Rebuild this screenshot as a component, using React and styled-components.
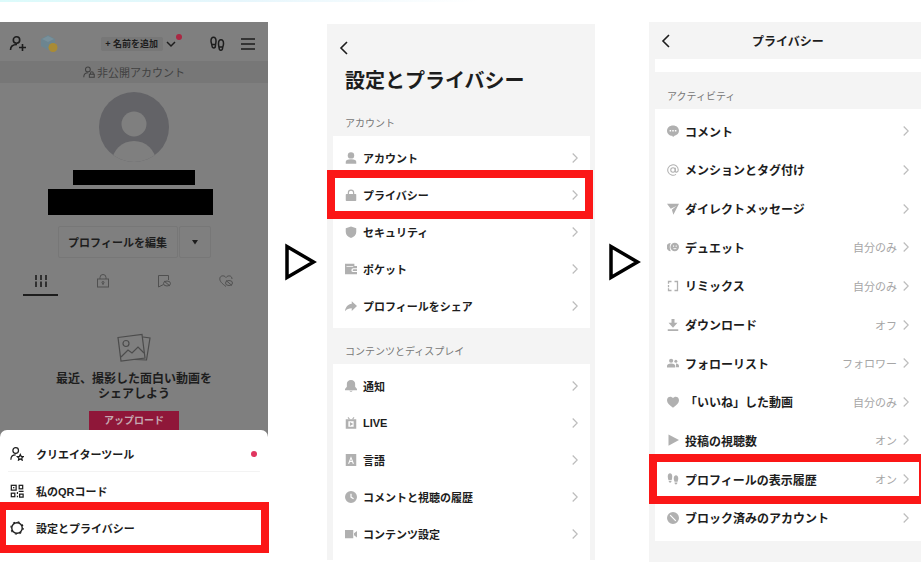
import React from 'react';
import styled, { createGlobalStyle, css } from 'styled-components';

const color = {
  ink: '#1d1d1d',
  muted: '#777',
  faint: '#a6a6a6',
  icon: '#b0b0b0',
  panel: '#f4f4f4',
  dim: '#7f7f7f',
  dimDark: '#777',
  mark: '#fb1717',
  pink: '#e0355f',
};

const GlobalStyle = createGlobalStyle`
  *, *::before, *::after { box-sizing: border-box; }
  body {
    margin: 0;
    background: #fff;
    color: ${color.ink};
    font-family: 'Liberation Sans', 'Noto Sans CJK JP', sans-serif;
    overflow-x: hidden;
  }
  h1, h2, h3, p, ul { margin: 0; padding: 0; }
  ul { list-style: none; }
  button {
    margin: 0;
    padding: 0;
    border: 0;
    background: none;
    color: inherit;
    font: inherit;
    cursor: pointer;
  }
  svg { display: block; flex: none; }
`;

/* ---------- icons ---------- */

const Svg = ({ size = 12, box = 16, children, ...rest }) => (
  <svg width={size} height={size} viewBox={`0 0 ${box} ${box}`} fill='none' aria-hidden='true' {...rest}>
    {children}
  </svg>
);

const solid = {
  account: (
    <>
      <circle cx='8' cy='4.500' r='4.300' />
      <path d='M1 15.500V13c0-2 2-3.500 7-3.500s7 1.500 7 3.500v2.500z' />
    </>
  ),
  lock: (
    <>
      <path d='M4.500 7V5a3.500 3.500 0 0 1 7 0v2' fill='none' stroke='currentColor' strokeWidth='1.6' />
      <rect x='1' y='6.500' width='14' height='9.500' rx='1' />
    </>
  ),
  shield: <path d='M8 .5 15 3v5c0 4-3 6.500-7 8-4-1.500-7-4-7-8V3z' />,
  wallet: <path fillRule='evenodd' d='M0 1h12.500v3H16v3h-5a2.200 2.200 0 0 0 0 5h5v3H0zM2 4v1h9V4zM11.500 8.300H16v2.500h-4.500a1.200 1.200 0 0 1 0-2.500z' />,
  share: <path d='M9 1.500l7 6.500-7 6.500V11c-4 0-6.500 1-9 4C.5 9.500 4 5.500 9 5z' />,
  bell: (
    <>
      <path d='M8 0c3.500 0 5.500 2.500 5.500 5v4L16 12v1.500H0V12l2.500-3V5c0-2.500 2-5 5.500-5z' />
      <path d='M5.500 14.300h5L8 16z' />
    </>
  ),
  live: (
    <>
      <path d='M4 .5 6 3M12 .5 10 3' stroke='currentColor' strokeWidth='1.5' />
      <path fillRule='evenodd' d='M1 3h14v12.500H1zM4.500 5.500v7.500h7V5.500zM6.500 6.500 11 9.300l-4.500 2.700z' />
    </>
  ),
  language: <path fillRule='evenodd' d='M1 0h14v16H1zM8 3l-4 10h1.700l.8-2.200h3L10.300 13H12zM8 6.200l1 3.100H7z' />,
  clock: <path fillRule='evenodd' d='M8 0a8 8 0 1 1 0 16A8 8 0 0 1 8 0zM7.200 3.500v5.200l3.800 2.300.8-1.300-3-1.900V3.500z' />,
  video: <path d='M0 2.500h11v11H0zM12 7l4-3v8.500l-4-3z' />,
  comment: <path fillRule='evenodd' d='M8 .5c4.500 0 8 3 8 7 0 3.500-2.500 5.800-6 6.700L8 16l-1-1.700C3 14 0 11.500 0 7.500c0-4 3.500-7 8-7zM3.500 6.500v2h2v-2zM7 6.500v2h2v-2zM10.500 6.500v2h2v-2z' />,
  at: (
    <g fill='none' stroke='currentColor' strokeWidth='1.4'>
      <circle cx='8' cy='8' r='3' />
      <path d='M11 5v4.500c0 2 4 2 4-1.500a7 7 0 1 0-3 5.800' />
    </g>
  ),
  send: <path d='M0 1h16L8.500 15.500 6.500 9l6-5L5 7.800z' />,
  duet: (
    <>
      <path d='M5 2.500a5.500 5.500 0 0 0 0 11C3.200 10 3.200 6 5 2.500z' />
      <path fillRule='evenodd' d='M10.300 2.300a5.700 5.700 0 1 1 0 11.400 5.700 5.700 0 0 1 0-11.400zM8 6v1.500h1.500V6zM11.500 6v1.500H13V6zM8 9.500c1 2 4 2 5 0z' />
    </>
  ),
  remix: (
    <g fill='none' stroke='currentColor' strokeWidth='1.7'>
      <path d='M6 2H2v3M2 6.500v3M2 11v3h4' />
      <path d='M10 2h4v12h-4' />
    </g>
  ),
  download: <path d='M6 0h4v5h4l-6 6.500L2 5h4zM1 13.500h14V16H1z' />,
  people: (
    <>
      <circle cx='5.500' cy='5' r='2.800' />
      <path d='M0 14V12c0-2 2-3.500 5.500-3.500S11 10 11 12v2zM12 13.800h4V12c0-2-1.500-3-4-3.300z' />
      <circle cx='11.800' cy='5.500' r='2' />
    </>
  ),
  heart: <path d='M8 15.500C3 12 0 9 0 5.500c0-5 6-6 8-2.500 2-3.500 8-2.500 8 2.500 0 3.500-3 6.500-8 10z' />,
  play: <path d='M2 .5 16 8 2 15.500z' />,
  steps: (
    <>
      <path d='M1 4.500c0-5.500 6-5.500 6 0 0 2-.5 3.500-.8 5H2c-.5-1.500-1-3-1-5zM2.300 10.700h3.700c0 3-3.700 3-3.700 0z' />
      <path d='M9 7c0-5.500 6-5.500 6 0 0 2-.5 3-.8 4.500H10C9.500 10 9 9 9 7zM10 12.800h3.900c0 3.500-3.900 3.500-3.900 0z' />
    </>
  ),
  block: <path fillRule='evenodd' d='M8 0a8 8 0 1 1 0 16A8 8 0 0 1 8 0zM4.800 3.700 3.700 4.800l7.500 7.500 1.100-1.100z' />,
};

const SolidIcon = ({ name }) => (
  <Svg fill='currentColor' color={color.icon}>{solid[name]}</Svg>
);

const Chevron = () => (
  <Svg size={12} box={12} width='6' viewBox='0 0 6 12' stroke='#bdbdbd' strokeWidth='1.2'>
    <path d='M.7 1.500 5.200 6 .7 10.500' />
  </Svg>
);

const BackIcon = () => (
  <Svg size={16} stroke={color.ink} strokeWidth='1.6'>
    <path d='M11 2 5 8l6 6' />
  </Svg>
);

const line = { stroke: 'currentColor', strokeWidth: 1.4 };

const AddPersonIcon = () => (
  <Svg size={18} box={18} {...line} strokeWidth='1.6'>
    <circle cx='7.500' cy='5' r='3.200' />
    <path d='M1.500 15c0-3.500 2.500-5.500 6.500-5.500M13.500 9v7M10 12.500h7' />
  </Svg>
);

const StickerIcon = () => (
  <Svg size={18} box={18}>
    <path d='m8 0 7 4v7l-7 4-7-4V4z' fill='#6c8590' />
    <path d='m8 1 6 3-6 3-6-3z' fill='#78909b' />
    <circle cx='13' cy='12.500' r='4.500' fill='#a98b35' />
  </Svg>
);

const FootprintsIcon = () => (
  <Svg size={16} {...line} strokeWidth='1.500'>
    <path d='M2 5c0-5 5-5 5 0 0 2-.5 3-.6 5 0 2.500-3.300 2.500-3.400 0C2.900 8 2 7 2 5zM2.700 8.500h3.700' />
    <path d='M14.500 7.500c0-5-5-5-5 0 0 2 .4 3 .6 4.500.2 3 3.300 3 3.500 0 .2-1.500.9-2.500.9-4.500zM10 11h3.700' />
  </Svg>
);

const MenuIcon = () => (
  <Svg size={16} {...line} strokeWidth='1.500'>
    <path d='M1 3h14M1 8h14M1 13h14' />
  </Svg>
);

const PrivateIcon = () => (
  <Svg size={12} {...line}>
    <circle cx='6.500' cy='4.500' r='3.200' />
    <path d='M1 15c0-4 2-6 6-6M10 11V9.500a1.800 1.800 0 0 1 3.600 0V11' />
    <rect x='8.500' y='11' width='6.500' height='4' />
  </Svg>
);

const GridIcon = () => (
  <Svg size={14} box={14} {...line} strokeWidth='1.600'>
    <path d='M2 1v5M7 1v5M12 1v5M2 7.500v5.500M7 7.500v5.500M12 7.500v5.500' />
  </Svg>
);

const LockTabIcon = () => (
  <Svg size={14} box={14} stroke='currentColor'>
    <path d='M4 5V3.500a3 3 0 0 1 6 0V5M7 9v2' />
    <rect x='1.500' y='5' width='11' height='8' />
    <circle cx='7' cy='8.500' r='1' />
  </Svg>
);

const SavedTabIcon = () => (
  <Svg size={14} box={14} stroke='currentColor'>
    <path d='M6.500 10.500 1.500 13V1.500h10V6' />
    <ellipse cx='10' cy='9.500' rx='3.500' ry='2.500' />
    <path d='m7 7 6 5' />
  </Svg>
);

const LikedTabIcon = () => (
  <Svg size={14} box={14} stroke='currentColor'>
    <path d='M7 12.500C3 9.500.8 7.500.8 4.800.8 1.500 5 .8 7 3.500c2-2.700 6-2 6 1.500' />
    <ellipse cx='10' cy='9' rx='3.500' ry='2.500' />
    <path d='m7 6.500 6 5' />
  </Svg>
);

const PhotosIcon = () => (
  <svg width='34' height='30' viewBox='0 0 34 30' fill='none' stroke='#4c4c4c' strokeWidth='1.2' aria-hidden='true'>
    <path d='M1 4.500 25 1.500 28 25 4 28z' />
    <path d='M26 4 33 5l-3.500 22-12-.5' />
    <circle cx='9' cy='10.500' r='3' />
    <path d='m4 24 7-7 4 3 6-6 6 6' />
  </svg>
);

const CreatorIcon = () => (
  <Svg size={14} {...line}>
    <circle cx='6.500' cy='4' r='3.200' />
    <path d='M1 14.500C1 11 3 9 6.500 9' />
    <path d='m11.800 8.500 1 2.200 2.400.3-1.700 1.600.4 2.400-2.100-1.200-2.100 1.200.4-2.400L8.400 11l2.400-.3z' />
  </Svg>
);

const QrIcon = () => (
  <Svg size={14} {...line}>
    <rect x='1.500' y='1.500' width='5.500' height='5.500' />
    <rect x='10.500' y='1.500' width='4' height='4' />
    <rect x='1.500' y='10.500' width='4' height='4' />
    <path d='M3.500 4.200h1.500M8.500 9v2.500M8.500 13.500v1.500M10 8.500h5.500M11 11.500h4v3.500h-4z' />
  </Svg>
);

const GearIcon = () => (
  <Svg size={14}>
    <circle cx='8' cy='8' r='6' stroke='currentColor' strokeWidth='1.600' />
    <circle cx='8' cy='8' r='7' stroke='currentColor' strokeWidth='1.400' strokeDasharray='2.200 3.300' />
  </Svg>
);

/* ---------- page ---------- */

const Page = styled.main`
  display: grid;
  grid-template-columns: 268fr 59fr 268fr 54fr 272fr;
  min-height: 100vh;
  padding: 22px 0 14px;
  overflow: hidden;
  background: linear-gradient(to right, #dcfbfb, #e6f6fc 50%, #fff) 0 0 / 52% 2px no-repeat;
`;

const Panel = styled.section`
  display: flex;
  flex-direction: column;
  min-width: 0;
  background: ${({ $bg }) => $bg || color.panel};
  ${({ $inset }) => $inset && css`margin: 2px 0;`}
`;

const Step = styled.div`
  display: flex;
  align-items: center;
  justify-content: center;
  padding: 0 0 60px 6px;
`;

const marked = css`
  position: relative;

  &::after {
    content: '';
    position: absolute;
    inset: ${({ $mark }) => $mark};
    border: 8px solid ${color.mark};
    pointer-events: none;
  }
`;

/* ---------- profile ---------- */

const ProfileBar = styled.header`
  display: grid;
  grid-template-columns: 31px 5fr auto 4fr 31px;
  align-items: center;
  height: 39px;
  padding: 4px 12px 0 9px;
`;

const BarEnd = styled.div`
  display: flex;
  justify-content: ${({ $right }) => ($right ? 'flex-end' : 'flex-start')};
`;

const NameButton = styled.button`
  position: relative;
  display: flex;
  align-items: center;
  gap: 3px;
  font-size: 9px;
  font-weight: 600;
  line-height: 14px;

  span {
    padding: 0 5px 0 4px;
    background: #777;
    border-radius: 2px;
  }
`;

const Dot = styled.i`
  width: 6px;
  height: 6px;
  border-radius: 50%;
  background: ${color.pink};
`;

const NameDot = styled(Dot)`
  position: absolute;
  top: -3px;
  right: -6px;
  background: #aa2843;
`;

const Notice = styled.p`
  display: flex;
  align-items: center;
  justify-content: center;
  gap: 2px;
  height: 22px;
  background: ${color.dimDark};
  color: #414141;
  font-size: 11px;
`;

const Profile = styled.div`
  display: flex;
  flex-direction: column;
  align-items: center;
  padding-top: 9px;
`;

const Redacted = styled.div`
  width: ${({ $width }) => $width}px;
  height: ${({ $height }) => $height}px;
  margin: ${({ $margin }) => $margin};
  background: #000;
`;

const EditGroup = styled.div`
  display: flex;
  gap: 1px;
  margin: 11px 0 0;

  button {
    height: 32px;
    border: 1px solid #777;
    border-radius: 2px;
    font-size: 11px;
    font-weight: 600;
  }
  button:first-child { width: 120px; }
  button:last-child {
    display: flex;
    align-items: center;
    justify-content: center;
    width: 32px;
  }
`;

const Tabs = styled.nav`
  display: grid;
  grid-template-columns: repeat(4, 1fr);
  align-self: stretch;
  height: 38px;
  padding: 0 11px 0 10px;
`;

const Tab = styled.button`
  display: flex;
  flex-direction: column;
  align-items: center;
  justify-content: flex-end;
  gap: 6px;
  color: ${({ $active }) => ($active ? color.ink : '#505050')};

  &::after {
    content: '';
    width: 35px;
    height: 2px;
    background: ${({ $active }) => ($active ? color.ink : 'transparent')};
  }
`;

const Empty = styled.div`
  display: flex;
  flex-direction: column;
  align-items: center;
  gap: 9px;
  padding-top: 37px;
  font-size: 12px;
  font-weight: 600;
  line-height: 15px;
  text-align: center;
`;

const Upload = styled.button`
  width: 90px;
  height: 19px;
  background: #8f1739;
  color: #c5a7b0;
  font-size: 10px;
  line-height: 18px;
`;

const Sheet = styled.ul`
  flex: 1;
  padding-top: 5px;
  border-radius: 7px 7px 0 0;
  background: #fff;
`;

const SheetItem = styled.li`
  ${({ $mark }) => $mark && marked}

  button {
    display: flex;
    align-items: center;
    gap: 12px;
    width: 100%;
    height: 37px;
    padding: 0 11px 0 10px;
    font-size: 11px;
    font-weight: 600;
  }
  ${Dot} { margin-left: auto; }

  &:first-child {
    background: linear-gradient(#f3f3f3, #f3f3f3) 50% 100% / 94% 1px no-repeat;
  }
`;

/* ---------- settings ---------- */

const BackButton = styled.button`
  display: flex;
  align-items: center;
  align-self: flex-start;
  height: ${({ $height }) => $height}px;
  padding-left: 9px;
`;

const PageTitle = styled.h1`
  padding-left: 18px;
  font-size: 20px;
  font-weight: 600;
  line-height: 20px;
  white-space: nowrap;
`;

const TitleBar = styled.header`
  display: grid;
  grid-template-columns: 34px 1fr 28px;
  align-items: center;
  height: 37px;

  h1 {
    font-size: 12px;
    font-weight: 600;
    text-align: center;
  }
`;

const Label = styled.h2`
  padding: ${({ $top }) => $top}px 18px 5px;
  color: ${color.muted};
  font-size: 10px;
  font-weight: 400;
  line-height: 14px;
`;

const Card = styled.ul`
  display: flex;
  flex-direction: column;
  flex: ${({ $grow }) => ($grow ? 1 : 'none')};
  margin: ${({ $margin }) => $margin};
  padding: 3px 0 4px;
  background: #fff;
`;

const Strip = styled.div`
  height: 13px;
  margin-left: 6px;
  background: #fff;
`;

const Item = styled.li`
  display: flex;
  flex: ${({ $grow }) => ($grow ? 1 : 'none')};
  min-height: 37px;
  ${({ $mark }) => $mark && marked}
`;

const ItemButton = styled.button`
  display: flex;
  align-items: center;
  gap: 6px;
  width: 100%;
  padding: 0 12px;
  font-size: ${({ $size }) => $size}px;
  font-weight: 600;
  text-align: left;
  white-space: nowrap;
`;

const Value = styled.span`
  margin-left: auto;
  color: ${color.faint};
  font-size: 11px;
  font-weight: 400;
`;

const accountItems = [
  { icon: 'account', text: 'アカウント' },
  { icon: 'lock', text: 'プライバシー', mark: '-6px -3px -6px -6px' },
  { icon: 'shield', text: 'セキュリティ' },
  { icon: 'wallet', text: 'ポケット' },
  { icon: 'share', text: 'プロフィールをシェア' },
];

const contentItems = [
  { icon: 'bell', text: '通知' },
  { icon: 'live', text: 'LIVE' },
  { icon: 'language', text: '言語' },
  { icon: 'clock', text: 'コメントと視聴の履歴' },
  { icon: 'video', text: 'コンテンツ設定' },
];

const activityItems = [
  { icon: 'comment', text: 'コメント' },
  { icon: 'at', text: 'メンションとタグ付け' },
  { icon: 'send', text: 'ダイレクトメッセージ' },
  { icon: 'duet', text: 'デュエット', value: '自分のみ' },
  { icon: 'remix', text: 'リミックス', value: '自分のみ' },
  { icon: 'download', text: 'ダウンロード', value: 'オフ' },
  { icon: 'people', text: 'フォローリスト', value: 'フォロワー' },
  { icon: 'heart', text: '「いいね」した動画', value: '自分のみ' },
  { icon: 'play', text: '投稿の視聴数', value: 'オン' },
  { icon: 'steps', text: 'プロフィールの表示履歴', value: 'オン', mark: '-6px -6px -6px -6px' },
  { icon: 'block', text: 'ブロック済みのアカウント' },
];

const List = ({ items, size = 11, grow, growItems, margin }) => (
  <Card $grow={grow} $margin={margin}>
    {items.map(({ icon, text, value, mark }) => (
      <Item key={text} $grow={growItems} $mark={mark}>
        <ItemButton type='button' $size={size}>
          <SolidIcon name={icon} />
          {text}
          <Value>{value}</Value>
          <Chevron />
        </ItemButton>
      </Item>
    ))}
  </Card>
);

const Arrow = () => (
  <Step>
    <svg width='32' height='38' viewBox='0 0 32 38' fill='none' stroke='#000' strokeWidth='3.5' aria-hidden='true'>
      <path d='M2 3.500v31L28.500 19z' />
    </svg>
  </Step>
);

const ProfilePanel = () => (
  <Panel $bg={color.dim}>
    <ProfileBar>
      <button type='button' aria-label='友達を追加'><AddPersonIcon /></button>
      <BarEnd><button type='button' aria-label='ステッカー'><StickerIcon /></button></BarEnd>
      <NameButton type='button'>
        <span>+ 名前を追加</span>
        <Svg size={10} box={10} {...line} strokeWidth='1.500'><path d='m1 3 4 4 4-4' /></Svg>
        <NameDot />
      </NameButton>
      <BarEnd $right><button type='button' aria-label='表示履歴'><FootprintsIcon /></button></BarEnd>
      <BarEnd as='button' $right type='button' aria-label='メニュー'><MenuIcon /></BarEnd>
    </ProfileBar>
    <Notice><PrivateIcon />非公開アカウント</Notice>
    <Profile>
      <svg width='70' height='70' viewBox='0 0 70 70' aria-hidden='true'>
        <clipPath id='avatar'><circle cx='35' cy='35' r='35' /></clipPath>
        <g clipPath='url(#avatar)'>
          <rect width='70' height='70' fill='#636367' />
          <circle cx='35' cy='32' r='12.500' fill={color.dim} />
          <ellipse cx='35' cy='70' rx='22' ry='21' fill={color.dim} />
        </g>
      </svg>
      <Redacted $width={122} $height={15} $margin='8px 0 0' />
      <Redacted $width={165} $height={26} $margin='4px 8px 0 0' />
      <EditGroup>
        <button type='button'>プロフィールを編集</button>
        <button type='button' aria-label='その他'>
          <Svg size={6} box={6} fill={color.ink}><path d='M0 1h6L3 5.500z' /></Svg>
        </button>
      </EditGroup>
      <Tabs>
        <Tab type='button' aria-label='投稿' $active><GridIcon /></Tab>
        <Tab type='button' aria-label='非公開'><LockTabIcon /></Tab>
        <Tab type='button' aria-label='保存済み'><SavedTabIcon /></Tab>
        <Tab type='button' aria-label='いいね'><LikedTabIcon /></Tab>
      </Tabs>
      <Empty>
        <PhotosIcon />
        <p>最近、撮影した面白い動画を<br />シェアしよう</p>
        <Upload type='button'>アップロード</Upload>
      </Empty>
    </Profile>
    <Sheet>
      <SheetItem><button type='button'><CreatorIcon />クリエイターツール<Dot /></button></SheetItem>
      <SheetItem><button type='button'><QrIcon />私のQRコード</button></SheetItem>
      <SheetItem $mark='-7px -1px -7px -2px'><button type='button'><GearIcon />設定とプライバシー</button></SheetItem>
    </Sheet>
  </Panel>
);

const SettingsPanel = () => (
  <Panel $inset>
    <BackButton type='button' aria-label='戻る' $height={47}><BackIcon /></BackButton>
    <PageTitle>設定とプライバシー</PageTitle>
    <Label $top={26}>アカウント</Label>
    <List items={accountItems} margin='0 5px 0 6px' />
    <Label $top={17}>コンテンツとディスプレイ</Label>
    <List items={contentItems} margin='0 5px 0 6px' grow />
  </Panel>
);

const PrivacyPanel = () => (
  <Panel>
    <TitleBar>
      <BackButton type='button' aria-label='戻る' $height={37}><BackIcon /></BackButton>
      <h1>プライバシー</h1>
    </TitleBar>
    <Strip />
    <Label $top={18}>アクティビティ</Label>
    <List items={activityItems} size={12} margin='0 0 21px 6px' grow growItems />
  </Panel>
);

const App = () => (
  <>
    <GlobalStyle />
    <Page>
      <ProfilePanel />
      <Arrow />
      <SettingsPanel />
      <Arrow />
      <PrivacyPanel />
    </Page>
  </>
);

export default App;
